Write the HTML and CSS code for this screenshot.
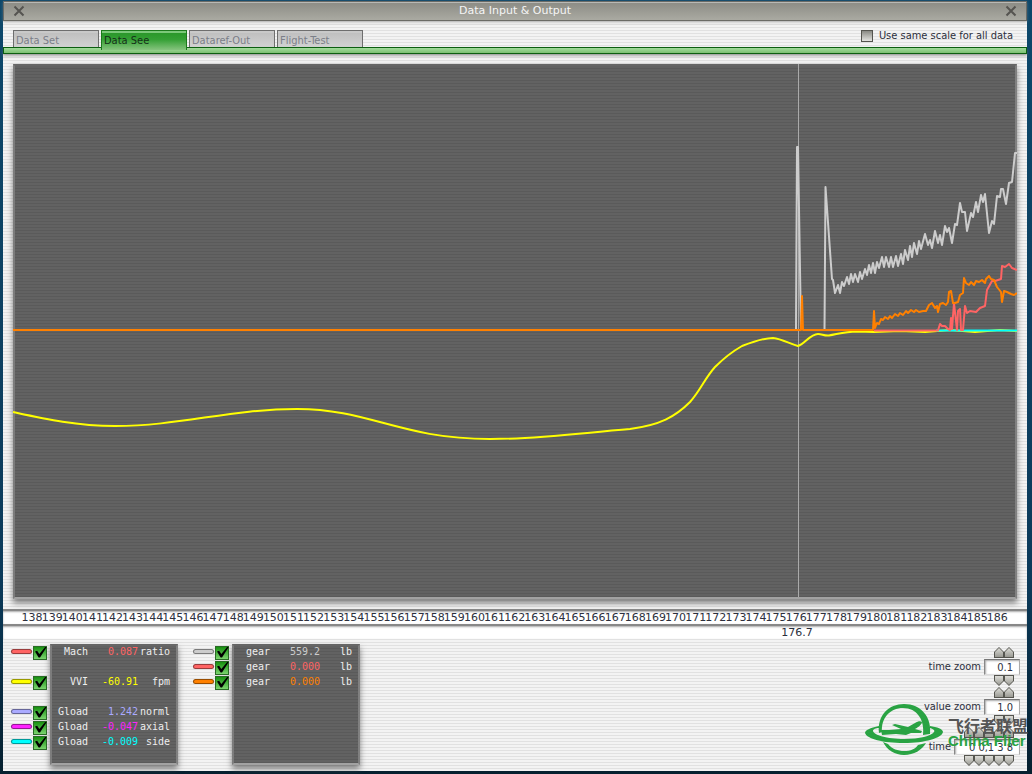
FILE: index.html
```
<!DOCTYPE html>
<html lang="en">
<head>
<meta charset="utf-8">
<title>Data Input &amp; Output</title>
<link rel="stylesheet" href="styles.css">
</head>
<body>
<div class="window">
  <header class="titlebar">
    <button class="close" aria-label="Close"><svg viewBox="0 0 12 12"><path d="M1.5 1.5 10.5 10.5M10.5 1.5 1.5 10.5"/></svg></button>
    <h1>Data Input &amp; Output</h1>
    <button class="close" aria-label="Close window"><svg viewBox="0 0 12 12"><path d="M1.5 1.5 10.5 10.5M10.5 1.5 1.5 10.5"/></svg></button>
  </header>

  <div class="toolbar">
    <nav class="tabs">
      <button class="tab">Data Set</button>
      <button class="tab active">Data See</button>
      <button class="tab">Dataref-Out</button>
      <button class="tab">Flight-Test</button>
    </nav>
    <label class="same-scale"><input type="checkbox">Use same scale for all data</label>
  </div>
  <div class="greenbar"></div>

  <main class="plot panel">
    <svg viewBox="13 64 1004 535" preserveAspectRatio="none" role="img" aria-label="Recorded flight data over time">
      <path class="cursor" d="M798.5 64V597"/>
      <path class="line yellow" d="M13 412C45 419 76 426 115 426C180 426 230 409 297 409C370 409 400 439 490 439C540 439 580 433 630 429C660 425 675 417 690 402C700 391 705 378 715 367C725 357 735 350 742 346C755 341 765 338 773 338C782 339 788 343 798 346C805 344 810 334 818 334C822 334 824 336 829 335.500C838 334 845 331.500 857 331.500L874 332L900 331L925 332L950 330L975 332L1000 330L1017 331"/>
      <path class="line cyan" d="M936 330.500H1017"/>
      <path class="line gray" d="M796 330 797 147 798 147 801 330M824.500 330 825.500 187 832 279 833 280 835 293 838 285 840 293 842 282 844 286 847 277 849 284 851 274 853 282 855 274 858 282 860 272 862 279 865 269 867 275 869 265 871 273 873 263 875 273 877 262 879 268 882 257 884 267 886 257 889 267 891 257 893 267 896 256 898 266 901 254 903 264 905 250 908 260 910 246 912 257 914 243 917 254 919 241 921 249 925 234 928 245 930 240 932 248 935 231 938 243 940 235 942 245 945 226 947 232 949 228 952 243 955 224 957 225 960 203 962 212 965 212 967 231 971 213 973 217 976 202 978 212 981 195 983 202 985 194 989 233 992 221 994 224 997 196 1000 197 1001 189 1003 189 1006 204 1009 183 1012 182 1015 153 1017 153"/>
      <path class="line red" d="M874 330.500H938L940 324 942 326 945 326 948 329 950 330 951 318 952 329 954 303 957 330 958 311 960 309 961 330 963 330 965 306 967 313 970 311 976 312 980 308 985 306 987 290 992 281 995 281 998 280 1001 279 1002 266 1005 267 1009 264 1012 268 1017 270"/>
      <path class="line orange" d="M13 330H801L802 296 803 330H873L874 311 875 328 877 323 879 324 881 319 883 320 885 317 888 319 890 316 892 318 895 314 898 316 900 313 903 315 906 311 908 313 911 310 914 312 916 310 919 312 923 311 926 311 929 305 932 303 935 308 937 306 938 312 940 304 943 303 946 305 948 302 949 292 951 291 953 303 955 303 958 302 960 295 963 293 964 278 966 283 969 285 971 282 974 285 976 281 979 282 982 280 985 283 986 279 989 276 991 279 994 280 997 287 1001 292 1002 302 1004 291 1007 292 1011 294 1014 295 1017 293"/>
    </svg>
  </main>

  <div class="axis">
    <span>138</span><span>139</span><span>140</span><span>141</span><span>142</span><span>143</span><span>144</span><span>145</span><span>146</span><span>147</span><span>148</span><span>149</span><span>150</span><span>151</span><span>152</span><span>153</span><span>154</span><span>155</span><span>156</span><span>157</span><span>158</span><span>159</span><span>160</span><span>161</span><span>162</span><span>163</span><span>164</span><span>165</span><span>166</span><span>167</span><span>168</span><span>169</span><span>170</span><span>171</span><span>172</span><span>173</span><span>174</span><span>175</span><span>176</span><span>177</span><span>178</span><span>179</span><span>180</span><span>181</span><span>182</span><span>183</span><span>184</span><span>185</span><span>186</span>
  </div>
  <div class="axis current"><output>176.7</output></div>

  <footer class="bottom">
    <section class="group">
      <div class="toggles">
        <label class="toggle red"><i></i><input type="checkbox" checked aria-label="Mach ratio"></label>
        <span></span>
        <label class="toggle yellow"><i></i><input type="checkbox" checked aria-label="VVI fpm"></label>
        <span></span>
        <label class="toggle lilac"><i></i><input type="checkbox" checked aria-label="Gload norml"></label>
        <label class="toggle magenta"><i></i><input type="checkbox" checked aria-label="Gload axial"></label>
        <label class="toggle cyan"><i></i><input type="checkbox" checked aria-label="Gload side"></label>
      </div>
      <div class="readout panel">
        <table>
          <tr><td>Mach</td><td class="red">0.087</td><td>ratio</td></tr>
          <tr><td></td><td></td><td></td></tr>
          <tr><td>VVI</td><td class="yellow">-60.91</td><td>fpm</td></tr>
          <tr><td></td><td></td><td></td></tr>
          <tr><td>Gload</td><td class="lilac">1.242</td><td>norml</td></tr>
          <tr><td>Gload</td><td class="magenta">-0.047</td><td>axial</td></tr>
          <tr><td>Gload</td><td class="cyan">-0.009</td><td>side</td></tr>
        </table>
      </div>
    </section>
    <section class="group">
      <div class="toggles">
        <label class="toggle gray"><i></i><input type="checkbox" checked aria-label="gear 1"></label>
        <label class="toggle red"><i></i><input type="checkbox" checked aria-label="gear 2"></label>
        <label class="toggle orange"><i></i><input type="checkbox" checked aria-label="gear 3"></label>
      </div>
      <div class="readout panel">
        <table>
          <tr><td>gear</td><td class="gray">559.2</td><td>lb</td></tr>
          <tr><td>gear</td><td class="red">0.000</td><td>lb</td></tr>
          <tr><td>gear</td><td class="orange">0.000</td><td>lb</td></tr>
        </table>
      </div>
    </section>

    <section class="controls">
      <div class="spinner">
        <div class="arrows"><button aria-label="up"></button><button aria-label="up"></button></div>
        <label>time zoom<input type="text" value="0.1"></label>
        <div class="arrows down"><button aria-label="down"></button><button aria-label="down"></button></div>
      </div>
      <div class="spinner">
        <div class="arrows"><button aria-label="up"></button><button aria-label="up"></button></div>
        <label>value zoom<input type="text" value="1.0"></label>
        <div class="arrows down"><button aria-label="down"></button><button aria-label="down"></button></div>
      </div>
      <div class="spinner">
        <div class="arrows"><button aria-label="up"></button><button aria-label="up"></button><button aria-label="up"></button><button aria-label="up"></button><button aria-label="up"></button></div>
        <label>time<input class="wide" type="text" value="0 0,1 3 8"></label>
        <div class="arrows down"><button aria-label="down"></button><button aria-label="down"></button><button aria-label="down"></button><button aria-label="down"></button><button aria-label="down"></button></div>
      </div>
    </section>
  </footer>

  <div class="brand">
    <svg viewBox="0 0 80 52">
      <path d="M14 30C12 12 24 1 39 1C56 1 67 14 65 31L58 32C60 17 52 5 38 5C25 5 16 15 17 29Z"/>
      <path d="M14 23C5 25 0 27 0 30C2 36 18 40 39 40C60 40 77 35 78 29C78 26 72 24 65 23L65 25C69 26 70 28 69 29C66 33 55 36 39 36C22 36 9 32 8 28C8 26 11 25 14 25Z"/>
      <path d="M18 39L23 41C27 46 33 48 39 48C46 48 50 46 53 42L61 40C57 47 49 52 39 52C30 52 22 47 18 39Z"/>
      <path d="M16 27L24 27 36 26 27 22 30 21 43 24 50 20C53 18 56 18 57 19C57 21 54 24 50 26L57 28 56 30 46 30 41 32 31 31 17 32Z"/>
    </svg>
    <div class="brand-text"><b class="cn" lang="zh">飞行者联盟</b><b class="en">China Flier</b></div>
  </div>
</div>
</body>
</html>
```
FILE: styles.css
```
* { box-sizing: border-box; }
body {
  margin: 0;
  padding: 1px 5px 4px 3px;
  min-height: 100vh;
  display: flex;
  background: linear-gradient(#0d486b, #0b3a5a 75%, #06202f);
  font: 11px/14px "DejaVu Sans Condensed", "DejaVu Sans", sans-serif;
  color: #2c2f3c;
}
button, input { font: inherit; color: inherit; margin: 0; padding: 0; border: 0; }
svg { display: block; }
.window {
  position: relative;
  flex: 1;
  display: flex;
  flex-direction: column;
  background: repeating-linear-gradient(#f3f3f3 0 2px, #e1e1e1 2px 3px);
}
.titlebar {
  display: flex;
  align-items: center;
  justify-content: space-between;
  height: 20px;
  padding: 0 9px;
  background: linear-gradient(#8b8b84, #aaaaa2);
  border: 1px solid #6b6b66;
  box-shadow: inset 0 1px #b9b9b5, 0 1px 3px #8888;
}
.titlebar h1 { margin: 0; font: 11px/14px "DejaVu Sans", sans-serif; color: #f5f5f5; }
.close { width: 12px; height: 12px; background: none; }
.close svg { width: 12px; height: 12px; stroke: #555450; stroke-width: 2; fill: none; }
.toolbar {
  display: flex;
  justify-content: space-between;
  align-items: flex-end;
  height: 26px;
  padding: 0 14px 0 10px;
}
.tabs { display: flex; gap: 2px; }
.tab {
  width: 86px;
  height: 17px;
  padding: 3px 0 0 2px;
  line-height: 14px;
  text-align: left;
  color: #7b7e88;
  background: linear-gradient(#bdbdbd, #d2d2d2);
  border: 1px solid #6e6e6e;
  border-bottom: 0;
  box-shadow: inset 0 2px #c9c9c9;
}
.tab.active {
  position: relative;
  height: 20px;
  margin-bottom: -3px;
  padding-bottom: 3px;
  color: #143018;
  background: linear-gradient(#269526, #35a035 45%, #86c47e);
  border-color: #1c7a1c;
  box-shadow: inset 0 2px #7cc87a;
}
.same-scale { display: flex; align-items: center; gap: 6px; height: 14px; margin-bottom: 4px; }
.same-scale input {
  appearance: none;
  width: 12px;
  height: 12px;
  background: linear-gradient(#8a8a84, #e4e4e0);
  border: 1px solid #55554f;
}
.greenbar {
  height: 7px;
  background: linear-gradient(#a2dc9c, #7cbf72);
  border: 1px solid #0c5e10;
  box-shadow: 0 2px 3px #7779;
}
.panel {
  background: repeating-linear-gradient(#626262 0 2px, #5a5a5a 2px 3px);
  border: 2px solid;
  border-color: #666 #808080 #a2a2a2 #7c7c7c;
  box-shadow: 0 4px 6px #555b;
}
.plot { flex: 1; min-height: 0; margin: 10px; display: flex; }
.plot svg { flex: 1; width: 0; margin: -2px; }
.line { fill: none; stroke-width: 2; stroke-linejoin: round; }
.line.yellow { stroke: #ff0; }
.line.cyan { stroke: #0ff; }
.line.gray { stroke: #ccc; }
.line.red { stroke: #ff6464; }
.line.orange { stroke: #ff8000; }
.cursor { stroke: #aaa; stroke-width: 1; }
.axis {
  display: flex;
  height: 15px;
  padding: 0 20px 0 19px;
  font: 11px/13px "DejaVu Sans", sans-serif;
  background: #fff;
  border-top: 2px solid #888;
  box-shadow: inset 0 1px 2px #aaa;
}
.axis span { flex: 1 1 0; width: 0; display: flex; justify-content: center; }
.axis.current { padding: 0 0 0 76%; }
.bottom { display: flex; height: 132px; padding: 5px 7px 5px 8px; align-items: flex-start; }
.group { display: flex; margin-right: 15px; }
.toggles { width: 39px; }
.toggles > * { display: flex; align-items: center; height: 15px; gap: 1px; }
.toggle i {
  width: 21px;
  height: 5px;
  border: 1px solid #0006;
  border-radius: 3px;
  background: currentColor;
}
.toggle input {
  appearance: none;
  width: 14px;
  height: 14px;
  position: relative;
  top: 1px;
  background: linear-gradient(#179010, #7bd46e);
  border: 1px solid #2a6a26;
}
.toggle input::after {
  content: "";
  position: absolute;
  inset: 0 -1px 1px 1px;
  background: #000;
  clip-path: polygon(0 45%, 18% 38%, 36% 68%, 85% 5%, 100% 0, 42% 100%, 30% 100%);
}
.readout { width: 128px; height: 121px; }
.readout table {
  border-collapse: collapse;
  table-layout: fixed;
  width: 118px;
  margin-top: -2px;
  font: 10px/15px "DejaVu Sans Mono", monospace;
  color: #eee;
}
.readout td { height: 15px; padding: 0; text-align: right; }
.readout td:nth-child(1) { width: 36px; }
.readout td:nth-child(2) { width: 50px; }
.red { color: #ff6464; }
.yellow { color: #ff0; }
.lilac { color: #aaaaff; }
.magenta { color: #f2f; }
.cyan { color: #0ff; }
.gray { color: #ccc; }
.orange { color: #ff8000; }
.controls { margin: 3px 0 0 auto; }
.spinner { height: 40px; }
.spinner label { display: flex; justify-content: flex-end; align-items: center; gap: 3px; height: 16px; }
.spinner input {
  width: 36px;
  height: 16px;
  padding-right: 6px;
  text-align: right;
  background: #fff;
  border: 1px solid;
  border-color: #777 #aaa #ddd #888;
  box-shadow: inset 1px 1px 2px #aaa;
}
.spinner .wide { width: 66px; }
.arrows { display: flex; justify-content: flex-end; height: 12px; padding-right: 6px; }
.arrows button {
  width: 10px;
  height: 11px;
  background: #55554f;
  clip-path: polygon(50% 0, 100% 45%, 100% 100%, 0 100%, 0 45%);
  display: grid;
  place-items: center;
}
.arrows button::after {
  content: "";
  width: 8px;
  height: 9px;
  background: linear-gradient(#ddddd8, #9a9a93);
  clip-path: polygon(50% 0, 100% 45%, 100% 100%, 0 100%, 0 45%);
}
.arrows.down button, .arrows.down button::after { clip-path: polygon(0 0, 100% 0, 100% 55%, 50% 100%, 0 55%); }
.brand {
  position: absolute;
  right: 0;
  bottom: 16px;
  display: flex;
  align-items: center;
  gap: 3px;
  pointer-events: none;
}
.brand svg { width: 80px; height: 52px; fill: #29a343; }
.brand-text { width: 79px; padding-top: 6px; display: flex; flex-direction: column; white-space: nowrap; }
.cn { font: 700 16px/17px "Noto Sans CJK SC", sans-serif; color: #555; }
.en { font: 700 15px/13px "Liberation Sans", sans-serif; color: #29a343; }
```
